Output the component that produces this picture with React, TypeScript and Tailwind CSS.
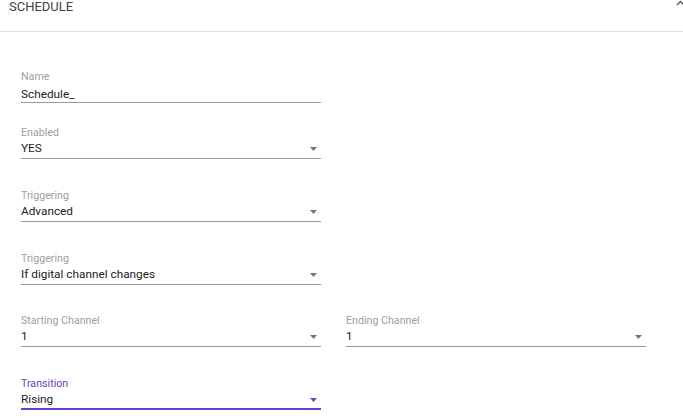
import React from "react";

function Arrow({ color }: { color: string }) {
  return (
    <svg width="7" height="4" viewBox="0 0 7 4" className="shrink-0 mr-[4px] mt-[2px]">
      <polygon points="0,0 7,0 3.5,4" fill={color} />
    </svg>
  );
}

function SelectField({
  label,
  value,
  focused = false,
}: {
  label: string;
  value: string;
  focused?: boolean;
}) {
  return (
    <div
      className={
        focused
          ? "w-[300px] border-b-2 border-[#6b40c9]"
          : "w-[300px] border-b border-[#9a9a9a] pb-[2px]"
      }
    >
      <div
        className={
          focused
            ? "text-[10.66px] leading-[12px] mb-[1px] text-[#6b40c9]"
            : "text-[10.66px] leading-[12px] mb-[1px] text-[#9e9e9e]"
        }
      >
        {label}
      </div>
      <div
        className={
          focused
            ? "flex items-center justify-between h-[16px] mb-[1px]"
            : "flex items-center justify-between h-[16px]"
        }
      >
        <span className="text-[11.8px] leading-[16px] text-[#222]">{value}</span>
        <Arrow color={focused ? "#6b40c9" : "#757575"} />
      </div>
    </div>
  );
}

export default function App() {
  return (
    <div
      className="w-full h-[418px] overflow-hidden bg-white"
      style={{ fontFamily: "Roboto, 'Liberation Sans', Arial, sans-serif" }}
    >
      <div className="flex justify-between items-start h-[32px] border-b border-[#e0e0e0] pl-[9px]">
        <span className="text-[13px] leading-[14px] text-[#424242]">SCHEDULE</span>
        <svg width="9" height="6" viewBox="0 0 9 6" className="mr-[-2px] mt-0">
          <polyline points="1,5 4.5,1.5 8,5" fill="none" stroke="#555" strokeWidth="1.4" />
        </svg>
      </div>
      <div className="pl-[21px] pt-[39px] flex flex-col">
        <div className="w-[300px] border-b border-[#9a9a9a]">
          <div className="text-[10.66px] leading-[12px] mb-[3px] text-[#9e9e9e]">Name</div>
          <div className="h-[16px] text-[11.8px] leading-[16px] text-[#222]">Schedule_</div>
        </div>
        <div className="mt-[24px]">
          <SelectField label="Enabled" value="YES" />
        </div>
        <div className="mt-[31px]">
          <SelectField label="Triggering" value="Advanced" />
        </div>
        <div className="mt-[31px]">
          <SelectField label="Triggering" value="If digital channel changes" />
        </div>
        <div className="mt-[30px] flex gap-[25px]">
          <SelectField label="Starting Channel" value="1" />
          <SelectField label="Ending Channel" value="1" />
        </div>
        <div className="mt-[31px]">
          <SelectField label="Transition" value="Rising" focused />
        </div>
      </div>
    </div>
  );
}
